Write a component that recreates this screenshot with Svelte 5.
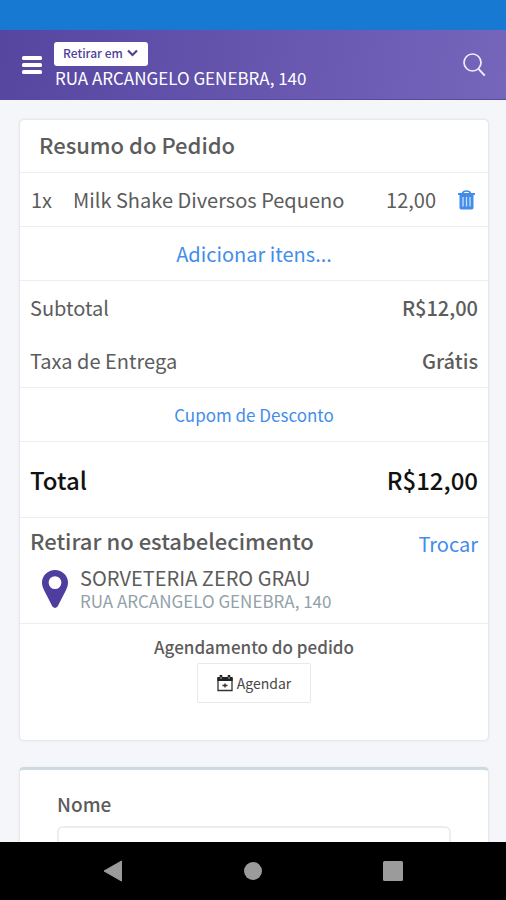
<script>
  const item = { quantity: '1x', name: 'Milk Shake Diversos Pequeno', price: '12,00' };
  const costs = [
    { label: 'Subtotal', value: 'R$12,00' },
    { label: 'Taxa de Entrega', value: 'Grátis' }
  ];
  const address = 'RUA ARCANGELO GENEBRA, 140';
  let name = $state('');
</script>

<div class="screen">
  <div class="status"></div>
  <header>
    <button class="icon menu" aria-label="Menu">
      <svg width="20" height="18" viewBox="0 0 20 18" fill="#fff">
        <rect width="20" height="4" rx="1.5" /><rect y="7" width="20" height="4" rx="1.5" /><rect y="14" width="20" height="4" rx="1.5" />
      </svg>
    </button>
    <div class="place">
      <button class="mode">
        Retirar em
        <svg width="11" height="8" viewBox="0 0 11 8" fill="none" stroke="#4f409c" stroke-width="2.2"><path d="M1 1.5 5.5 6 10 1.5" /></svg>
      </button>
      <span class="address">{address}</span>
    </div>
    <button class="icon" aria-label="Buscar">
      <svg width="24" height="24" viewBox="0 0 24 24" fill="none" stroke="#f1edff" stroke-width="1.7">
        <circle cx="10.500" cy="9.500" r="8.500" /><path d="m16.200 15.600 6.600 7" stroke-width="2" />
      </svg>
    </button>
  </header>

  <main>
    <section class="card summary">
      <h1>Resumo do Pedido</h1>
      <div class="row item">
        <span class="quantity">{item.quantity}</span>
        <span class="product">{item.name}</span>
        <span>{item.price}</span>
        <button class="icon" aria-label="Remover">
          <svg width="17" height="20" viewBox="0 0 17 20">
            <path d="M4.500 3.500Q5 1 8.500 1t4 2.500" fill="none" stroke="#438dea" stroke-width="1.6" />
            <path d="M0 3h17v2H0z" fill="#438dea" />
            <path d="M1.500 5h14v12.800q0 1.700-1.700 1.700H3.200q-1.700 0-1.700-1.700z" fill="#438dea" />
            <path d="M5 7v9.500M8.500 7v9.500M12 7v9.500" stroke="#c5dffb" stroke-width="1.3" />
          </svg>
        </button>
      </div>
      <div class="row center"><a class="add" href="#itens">Adicionar itens...</a></div>
      <dl class="costs">
        {#each costs as cost}
          <div><dt>{cost.label}</dt><dd>{cost.value}</dd></div>
        {/each}
      </dl>
      <div class="row center"><a class="coupon" href="#cupom">Cupom de Desconto</a></div>
      <div class="row total"><span>Total</span><span>R$12,00</span></div>
      <div class="pickup">
        <div class="heading">
          <h2>Retirar no estabelecimento</h2>
          <a href="#trocar">Trocar</a>
        </div>
        <div class="store">
          <svg width="26" height="38" viewBox="0 0 26 38">
            <path d="M13 0C5.800 0 0 5.600 0 12.600c0 3.200 1 5.400 2.200 8L10.400 36.600q2.600 2.800 5.200 0L23.800 20.600c1.200-2.600 2.200-4.800 2.200-8C26 5.600 20.200 0 13 0Zm0 6.200a6.400 6.400 0 1 1 0 12.800a6.400 6.400 0 0 1 0-12.800Z" fill="#4f3da0" fill-rule="evenodd" />
          </svg>
          <div>
            <p class="store-name">SORVETERIA ZERO GRAU</p>
            <p class="store-address">{address}</p>
          </div>
        </div>
      </div>
      <div class="schedule">
        <h3>Agendamento do pedido</h3>
        <button>
          <svg width="16" height="17" viewBox="0 0 16 17">
            <path d="M1 3.500h14v12H1z" fill="none" stroke="#333" stroke-width="1.300" />
            <path d="M.4 2h15.200v4H.4z" fill="#222" />
            <path d="M4 0v4M12 0v4" stroke="#222" stroke-width="2.600" />
            <path d="M4 2v2M12 2v2" stroke="#ddd" stroke-width=".8" />
            <path d="M8 8.500v4M5.500 10.500h5" stroke="#333" stroke-width="1.400" />
          </svg>
          Agendar
        </button>
      </div>
    </section>

    <section class="card details">
      <label for="customer">Nome</label>
      <input id="customer" type="text" bind:value={name} />
    </section>
  </main>

  <nav aria-label="Sistema">
    <button class="icon" aria-label="Voltar"><svg width="20" height="22" viewBox="0 0 20 22"><path d="M18.500 1v20L1 11z" fill="#9b9b9b" stroke="#9b9b9b" stroke-linejoin="round" /></svg></button>
    <button class="icon" aria-label="Início"><svg width="20" height="20"><circle cx="10" cy="10" r="9" fill="#9b9b9b" /></svg></button>
    <button class="icon" aria-label="Recentes"><svg width="20" height="20"><rect width="20" height="20" rx="1.500" fill="#9b9b9b" /></svg></button>
  </nav>
</div>

<style>
  :global(body) { margin: 0; }
  .screen {
    display: flex;
    flex-direction: column;
    height: 100vh;
    background: #f4f6fa;
    color: #5c5c5c;
    font: 20px/28px "Noto Sans CJK SC", "Noto Sans", sans-serif;
  }
  .screen * { box-sizing: border-box; }
  h1, h2, h3, p, dl, dd { margin: 0; }
  a { color: #438dea; text-decoration: none; }
  button { font: inherit; cursor: pointer; }
  svg { display: block; flex: none; }
  .icon { display: flex; padding: 0; border: 0; background: none; }

  .status { flex: none; height: 30px; background: #1879d3; }
  header {
    display: flex;
    flex: none;
    align-items: center;
    height: 70px;
    padding: 0 20px 0 22px;
    background: linear-gradient(100deg, #5646a0, #7565bb);
    border-bottom: 1px solid #5949a0;
  }
  .place {
    display: flex;
    flex: 1;
    flex-direction: column;
    align-items: flex-start;
    margin-left: 12px;
    padding-top: 2px;
  }
  .mode {
    display: flex;
    align-items: center;
    gap: 4px;
    height: 24px;
    padding: 0 10px 2px 9px;
    border: 0;
    border-radius: 3px;
    background: #fff;
    color: #4f409c;
    font-size: 12px;
    line-height: 20px;
    font-weight: 500;
  }
  .address { color: #fff; font-size: 17px; line-height: 24px; margin-left: 1px; }

  main { flex: 1; min-height: 0; overflow: hidden; padding: 19px 17px 0 19px; }
  .card {
    background: #fff;
    border: 1px solid #e6e8ea;
    border-radius: 5px;
    box-shadow: 0 0 2px #dfe2e4;
  }
  .summary { margin-bottom: 26px; }
  h1 {
    height: 52px;
    padding: 0 19px;
    font-size: 22px;
    line-height: 48px;
    font-weight: 500;
  }
  .row, .costs, .pickup, .schedule { border-top: 1px solid #eceef0; }
  .row { display: flex; align-items: center; height: 54px; padding: 0 10px; }
  .center { justify-content: center; }
  .item { padding: 0 13px 0 11px; }
  .quantity { width: 42px; }
  .product { flex: 1; }
  .item .icon { margin-left: 22px; }
  .costs { height: 107px; }
  .costs div {
    display: flex;
    justify-content: space-between;
    padding: 0 10px;
    line-height: 53px;
  }
  .costs dd { font-weight: 500; }
  .coupon { font-size: 17px; }
  .total {
    justify-content: space-between;
    height: 76px;
    color: #111;
    font-size: 24px;
    font-weight: 500;
  }
  .pickup { height: 106px; padding: 8px 10px 0; }
  .heading { display: flex; justify-content: space-between; }
  .heading a { padding-top: 4px; }
  h2 { font-size: 22px; line-height: 28px; font-weight: 500; }
  .store { display: flex; align-items: center; gap: 12px; padding: 8px 0 0 12px; }
  .store-name { line-height: 24px; }
  .store-address { color: #93a1a8; font-size: 17px; line-height: 22px; }
  .schedule {
    display: flex;
    flex-direction: column;
    align-items: center;
    padding: 9px 10px 37px;
  }
  h3 { font-size: 17px; line-height: 28px; font-weight: 500; }
  .schedule button {
    display: flex;
    align-items: center;
    gap: 4px;
    height: 40px;
    margin-top: 2px;
    padding: 0 19px;
    border: 1px solid #e9e9e9;
    border-radius: 2px;
    background: #fff;
    color: #484848;
    font-size: 14px;
  }
  .details { border-top: 3px solid #cddbe0; padding: 20px 37px 24px; }
  label { display: block; font-size: 19px; line-height: 28px; font-weight: 500; }
  input {
    width: 100%;
    height: 48px;
    margin-top: 8px;
    padding: 0 12px;
    border: 2px solid #ebeeee;
    border-radius: 6px;
    background: #fff;
    color: inherit;
    font: inherit;
  }
  nav {
    display: flex;
    flex: none;
    align-items: center;
    justify-content: space-between;
    height: 58px;
    padding: 0 103px;
    background: #000;
  }
</style>
